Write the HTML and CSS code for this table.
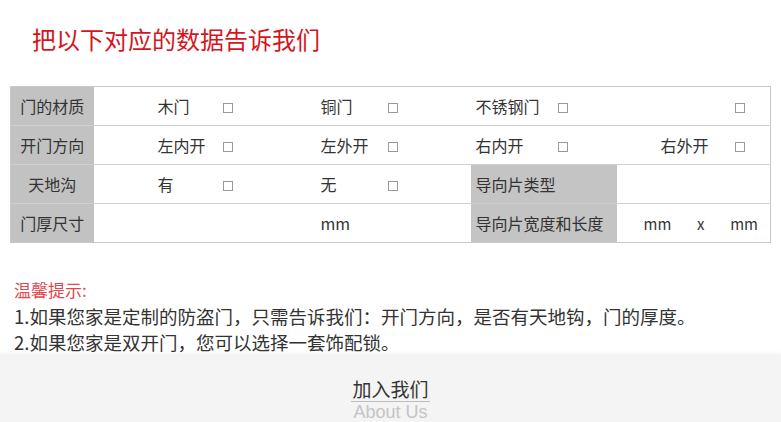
FILE: index.html
```html
<!DOCTYPE html>
<html lang="zh-CN">
<head>
<meta charset="utf-8">
<title>把以下对应的数据告诉我们</title>
<link rel="stylesheet" href="styles.css">
</head>
<body>
<div class="page">
  <h1 class="title">把以下对应的数据告诉我们</h1>
  <table class="spec">
    <colgroup>
      <col class="w-label"><col class="w-a"><col class="w-b"><col class="w-c"><col class="w-d"><col class="w-e"><col class="w-f"><col class="w-g"><col class="w-h">
    </colgroup>
    <tr>
      <th class="label">门的材质</th>
      <td class="ca">木门</td><td class="box"><span class="chk"></span></td>
      <td class="cc">铜门</td><td class="box"><span class="chk"></span></td>
      <td class="ce">不锈钢门</td><td class="box"><span class="chk"></span></td>
      <td class="cg"></td><td class="box"><span class="chk"></span></td>
    </tr>
    <tr>
      <th class="label">开门方向</th>
      <td class="ca">左内开</td><td class="box"><span class="chk"></span></td>
      <td class="cc">左外开</td><td class="box"><span class="chk"></span></td>
      <td class="ce">右内开</td><td class="box"><span class="chk"></span></td>
      <td class="cg">右外开</td><td class="box"><span class="chk"></span></td>
    </tr>
    <tr>
      <th class="label">天地沟</th>
      <td class="ca">有</td><td class="box"><span class="chk"></span></td>
      <td class="cc">无</td><td class="box"><span class="chk"></span></td>
      <td class="ce shade" colspan="2">导向片类型</td>
      <td colspan="2"></td>
    </tr>
    <tr>
      <th class="label">门厚尺寸</th>
      <td colspan="2"></td>
      <td class="cc">mm</td><td></td>
      <td class="ce shade" colspan="2">导向片宽度和长度</td>
      <td colspan="2"><div class="dims"><span>mm</span><span>x</span><span>mm</span></div></td>
    </tr>
  </table>
  <div class="tips">
    <p class="tips-head">温馨提示:</p>
    <p>1.如果您家是定制的防盗门，只需告诉我们：开门方向，是否有天地钩，门的厚度。</p>
    <p class="tips-last">2.如果您家是双开门，您可以选择一套饰配锁。</p>
  </div>
</div>
<footer class="foot">
  <div class="foot-cn">加入我们</div>
  <div class="foot-en">About Us</div>
</footer>
</body>
</html>
```
FILE: styles.css
```css
* { box-sizing: border-box; }
html, body { margin: 0; padding: 0; background: #fff; }
body {
  font-family: "Noto Sans CJK SC", "Noto Sans", sans-serif;
  color: #333;
  overflow: hidden;
}
.page { padding: 0 11px 0 10px; }
.title {
  margin: 0;
  padding: 22px 0 0 22px;
  font-size: 24px;
  line-height: 34px;
  font-weight: 400;
  color: #d5151d;
}
.spec {
  margin-top: 30px;
  width: 760px;
  border-collapse: collapse;
  table-layout: fixed;
  border: 1px solid #c9c9c9;
  font-size: 16px;
}
.w-label { width: 83px; }
.w-a { width: 117px; }
.w-b { width: 95px; }
.w-c { width: 70px; }
.w-d { width: 95px; }
.w-e { width: 75px; }
.w-f { width: 71px; }
.w-g { width: 106px; }
.w-h { width: 48px; }
.spec tr { height: 39px; }
.spec th, .spec td {
  padding: 0;
  border-bottom: 1px solid #cfcfcf;
  white-space: nowrap;
  vertical-align: middle;
  text-align: left;
  font-weight: 400;
  color: #333;
}
.spec tr:last-child th, .spec tr:last-child td { border-bottom: none; }
.label {
  background: #c2c2c2;
  text-align: center !important;
  color: #333;
}
.ca { padding-left: 64px !important; }
.cc { padding-left: 15px !important; }
.ce { padding-left: 5px !important; }
.cg { padding-right: 14px !important; text-align: right !important; }
.shade { background: #c4c4c4; }
.box { padding-left: 12px !important; }
.chk {
  display: inline-block;
  width: 10px;
  height: 10px;
  border: 1px solid #999;
  vertical-align: middle;
  position: relative;
  top: -1px;
}
.dims {
  display: flex;
  justify-content: space-between;
  padding: 0 12px 0 27px;
  font-size: 15px;
}
.tips { margin-top: 33px; padding-left: 4px; }
.tips p {
  margin: 0;
  font-size: 18.5px;
  line-height: 27px;
  color: #333;
}
.tips .tips-head { font-size: 17px; color: #e2474e; }
.tips .tips-last { line-height: 24px; }
.foot {
  background: #f4f4f4;
  box-shadow: 0 -2px 4px rgba(0,0,0,0.03);
  padding-top: 23px;
  height: 80px;
  display: flex;
  flex-direction: column;
  align-items: center;
}
.foot-cn {
  font-size: 19px;
  line-height: 24px;
  color: #333;
  border-bottom: 1px solid #bdbdbd;
  padding: 0 1px;
}
.foot-en {
  font-family: "Liberation Sans", Arial, sans-serif;
  font-size: 18px;
  line-height: 20px;
  color: #c4c4c4;
}
```
